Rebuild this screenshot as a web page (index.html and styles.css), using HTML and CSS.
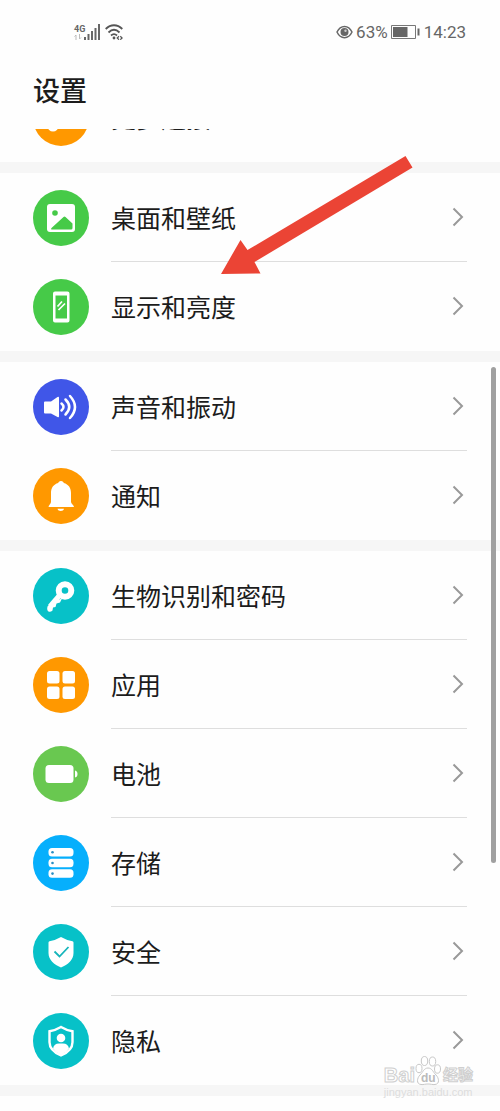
FILE: index.html
```html
<!DOCTYPE html>
<html lang="zh-CN">
<head>
<meta charset="utf-8">
<meta name="viewport" content="width=device-width, initial-scale=1">
<title>设置</title>
<link rel="stylesheet" href="styles.css">
</head>
<body>
<svg class="defs" aria-hidden="true">
  <symbol id="chevron" viewBox="0 0 12 20"><path d="M1.5 1.5 10 10l-8.500 8.500" fill="none" stroke="currentColor" stroke-width="2"/></symbol>
</svg>
<header class="header">
  <div class="status">
    <div class="status-side">
      <span class="network"><span>4G</span><svg width="8" height="6" viewBox="0 0 8 6"><path d="M2 6V1L.5 2.500M5.500 0v5L7 3.500" fill="none" stroke="#bbb"/></svg></span>
      <svg width="17" height="16" viewBox="0 0 17 16" fill="#666"><path d="M0 13h2v3H0zM3.500 10h2v6h-2zM7 7h2v9H7zM10.500 4h2v12h-2zM14 0h2v16h-2z"/></svg>
      <svg class="wifi" width="18" height="16" viewBox="0 0 18 16" fill="none" stroke="#555" stroke-width="1.800"><path d="M.7 5c5-5 11.600-5 16.600 0M3.500 8.500c3.500-3.500 7.500-3.500 11 0M6 11.500c2-1.800 4-1.800 6 0"/><circle cx="9" cy="14" r="1.400" fill="#555" stroke="none"/><path d="m14 12.300-1.800 1.700 1.800 1.700M15.300 12.300l1.800 1.700-1.800 1.700" stroke-width="1.200"/></svg>
    </div>
    <div class="status-side">
      <svg width="17" height="14" viewBox="0 0 17 14"><path d="M1 7c3.500-7.500 11.500-7.500 15 0-3.500 7.500-11.500 7.500-15 0z" fill="none" stroke="#666" stroke-width="1.500"/><circle cx="8.500" cy="7" r="4" fill="#666"/><circle cx="9.500" cy="5.800" r="1.200" fill="#ccc"/></svg>
      <span>63%</span>
      <svg class="battery" width="29" height="14" viewBox="0 0 29 14"><path d="M.5.5h24v13H.5z" fill="none" stroke="#777"/><path d="M2 2h14.500v10H2zM26.500 3.500h2v7h-2z" fill="#666"/></svg>
      <time>14:23</time>
    </div>
  </div>
  <h1 class="title">设置</h1>
</header>
<main class="viewport">
  <div class="sections">
    <ul class="section">
      <li><a class="row" href="#more"><span class="icon orange"><svg viewBox="0 0 56 56"><path d="m20 36 16-16" stroke="#fff" stroke-width="5"/><circle cx="20" cy="36" r="5.500" fill="#fff"/><circle cx="36" cy="20" r="6" fill="#fff"/></svg></span><span class="label">更多连接<svg class="chevron"><use href="#chevron"/></svg></span></a></li>
    </ul>
    <ul class="section">
      <li><a class="row" href="#wallpaper"><span class="icon green"><svg viewBox="0 0 56 56"><rect x="14" y="14" width="28" height="28" rx="3" fill="#fff"/><circle cx="22" cy="23" r="2.800" fill="#46ca48"/><path d="M18.500 39.500q-1-.5 0-1.500L30.500 27Q31.500 26 32.500 27L39.500 33.500V38Q39.500 39.500 38 39.500z" fill="#46ca48"/></svg></span><span class="label">桌面和壁纸<svg class="chevron"><use href="#chevron"/></svg></span></a></li>
      <li><a class="row" href="#display"><span class="icon green"><svg viewBox="0 0 56 56" fill="none" stroke="#fff"><path d="M22 12.500h12.500a2 2 0 0 1 2 2v27a2 2 0 0 1-2 2H22a2 2 0 0 1-2-2v-27a2 2 0 0 1 2-2zM22.500 16.500v23H34v-23z" fill="#fff" fill-rule="evenodd" stroke="none"/><path d="m24.500 27.500 4.500-5M25.500 31l6.500-6.500" stroke-width="1.700"/></svg></span><span class="label">显示和亮度<svg class="chevron"><use href="#chevron"/></svg></span></a></li>
    </ul>
    <ul class="section">
      <li><a class="row" href="#sound"><span class="icon blue"><svg viewBox="0 0 56 56"><path d="M12 22.500h6L24.500 18q1.500-1 1.500.8v18.400q0 1.800-1.500.8L18 34.500h-6q-1 0-1-1v-10q0-1 1-1z" fill="#fff"/><path d="M28.500 24.500q4 3.500 0 7M32.500 20.500q7.500 7.500 0 15M37 17q10 11 0 22" fill="none" stroke="#fff" stroke-width="2.500" stroke-linecap="round"/></svg></span><span class="label">声音和振动<svg class="chevron"><use href="#chevron"/></svg></span></a></li>
      <li><a class="row" href="#notify"><span class="icon orange"><svg viewBox="0 0 56 56" fill="#fff"><path d="M28 13c1.800 0 2.500 1 2.800 2 4.700 1.300 7.200 5 7.200 10v9c0 2 3 3 3 5H15.500c0-2 2.500-3 2.500-5v-9c0-5 2.500-8.700 7.200-10 .3-1 1-2 2.800-2zM24.500 40.800h6.500c-.5 3-6 3-6.500 0z"/></svg></span><span class="label">通知<svg class="chevron"><use href="#chevron"/></svg></span></a></li>
    </ul>
    <ul class="section">
      <li><a class="row" href="#biometrics"><span class="icon teal"><svg viewBox="0 0 56 56"><path d="m26 28-9 10.500" stroke="#fff" stroke-width="5"/><path d="m18 34.500-3.500 4q-1 3.500 1 5 2 .8 4-1l.5-3 2.500-.5 1-3.500 3.500-1 2-4z" fill="#fff"/><circle cx="32" cy="22.500" r="6.300" fill="none" stroke="#fff" stroke-width="6"/></svg></span><span class="label">生物识别和密码<svg class="chevron"><use href="#chevron"/></svg></span></a></li>
      <li><a class="row" href="#apps"><span class="icon orange"><svg viewBox="0 0 56 56" fill="#fff"><rect x="14" y="14" width="12.500" height="12.500" rx="2.500"/><rect x="29.500" y="14" width="12.500" height="12.500" rx="2.500"/><rect x="14" y="29.500" width="12.500" height="12.500" rx="2.500"/><rect x="29.500" y="29.500" width="12.500" height="12.500" rx="2.500"/></svg></span><span class="label">应用<svg class="chevron"><use href="#chevron"/></svg></span></a></li>
      <li><a class="row" href="#battery"><span class="icon lime"><svg viewBox="0 0 56 56" fill="#fff"><rect x="12.500" y="19" width="28" height="18" rx="3.500"/><path d="M42 24.500q2.500.5 2.500 3.500T42 31.500z"/></svg></span><span class="label">电池<svg class="chevron"><use href="#chevron"/></svg></span></a></li>
      <li><a class="row" href="#storage"><span class="icon sky"><svg viewBox="0 0 56 56"><g fill="#fff"><rect x="15.500" y="13" width="25" height="8.500" rx="3.500"/><rect x="15.500" y="23.700" width="25" height="8.500" rx="3.500"/><rect x="15.500" y="34.300" width="25" height="8.500" rx="3.500"/></g><g fill="#2a8fc4"><circle cx="19.500" cy="17.300" r="1.300"/><circle cx="19.500" cy="28" r="1.300"/><circle cx="19.500" cy="38.600" r="1.300"/></g></svg></span><span class="label">存储<svg class="chevron"><use href="#chevron"/></svg></span></a></li>
      <li><a class="row" href="#security"><span class="icon teal"><svg viewBox="0 0 56 56"><path d="M28 13q6 3.500 11.500 4.200 1 .2 1 1.300v10.500c0 7-5.500 11.500-12.500 14.500-7-3-12.500-7.500-12.500-14.500V18.500q0-1.100 1-1.300Q22 16.500 28 13z" fill="#fff"/><path d="m21.500 27.500 5 5 9-9.500" fill="none" stroke="#16b5bb" stroke-width="1.800"/></svg></span><span class="label">安全<svg class="chevron"><use href="#chevron"/></svg></span></a></li>
      <li><a class="row" href="#privacy"><span class="icon teal"><svg viewBox="0 0 56 56"><path d="M28 14q5.500 3.300 11.500 4.200v11c0 6.500-5 10.500-11.500 13.300-6.500-2.800-11.500-6.800-11.500-13.300v-11Q22.500 17.300 28 14z" fill="none" stroke="#fff" stroke-width="2.400"/><circle cx="28" cy="25" r="4.300" fill="#fff"/><path d="M20 35.500q1-5 6-5h4q5 0 6 5-3 4.500-8 6.500-5-2-8-6.500z" fill="#fff"/></svg></span><span class="label">隐私<svg class="chevron"><use href="#chevron"/></svg></span></a></li>
    </ul>
  </div>
  <div class="scroll-thumb"></div>
  <svg class="pointer" width="192" height="120" viewBox="0 0 192 120"><path d="M0 118 19.500 84l7 10L184.500 0l7 11.500L33.500 106l6 11.500z" fill="#eb4435"/></svg>
  <div class="watermark">
    <div class="brand"><span>Bai</span><svg width="26" height="30" viewBox="0 0 26 30" fill="#fff" stroke="#c8c8c8"><ellipse cx="4" cy="12.500" rx="3" ry="4.200"/><ellipse cx="9.500" cy="5" rx="3.200" ry="4.500"/><ellipse cx="17.500" cy="5.500" rx="3.200" ry="4.500"/><ellipse cx="22.500" cy="13" rx="3" ry="4.200"/><path d="M13 12c4 0 5 4 8 7s4 9-1 9.500c-3 .3-4-.5-7-.5s-4 .8-7 .5c-5-.5-4-6.500-1-9.500s4-7 8-7z"/><text x="6" y="26" class="du">du</text></svg><span class="cn">经验</span></div>
    <div class="domain">jingyan.baidu.com</div>
  </div>
</main>
</body>
</html>
```
FILE: styles.css
```css
* { box-sizing: border-box; }

body {
  margin: 0;
  height: 100vh;
  display: flex;
  flex-direction: column;
  overflow: hidden;
  background: #fefefe;
  color: #1c1c1c;
  font-family: "Noto Sans CJK SC", sans-serif;
}

.defs { display: none; }

.header {
  flex: none;
  height: 129px;
  padding: 20px 33px 0;
}

.status {
  display: flex;
  justify-content: space-between;
  align-items: center;
  height: 24px;
  padding: 0 1px 0 41px;
  color: #666;
  font: 17px/24px Roboto, sans-serif;
}

.status-side {
  display: flex;
  align-items: center;
  gap: 3px;
}

.network {
  display: flex;
  flex-direction: column;
  margin-right: -4px;
  font: bold 9px/10px Roboto, sans-serif;
}

.wifi { margin-left: 1px; }
.battery { margin-right: 1px; }

.title {
  margin: 26px 0 0;
  font-size: 27px;
  line-height: 40px;
  font-weight: 500;
}

.viewport {
  position: relative;
  flex: 1;
  min-height: 0;
  overflow: hidden;
}

/* The list is scrolled so that its first row is partly under the header. */
.sections { margin-top: -56px; }

.section {
  margin: 0;
  padding: 0;
  list-style: none;
  border-bottom: 11px solid #f6f6f6;
}

.row {
  display: flex;
  align-items: center;
  gap: 22px;
  height: 89px;
  padding: 0 33px;
  color: inherit;
  text-decoration: none;
}

.icon {
  flex: none;
  width: 56px;
  height: 56px;
  border-radius: 50%;
}

.icon svg { display: block; }

.green { background: #46ca48; }
.orange { background: #ff9800; }
.blue { background: #4056e8; }
.teal { background: #07c1c8; }
.lime { background: #69c850; }
.sky { background: #06affc; }

.label {
  flex: 1;
  display: flex;
  align-items: center;
  justify-content: space-between;
  height: 100%;
  padding-right: 3px;
  border-bottom: 1px solid #dedede;
  font-size: 25px;
  line-height: 36px;
}

li:last-child .label { border-bottom-color: transparent; }

.chevron {
  width: 12px;
  height: 20px;
  color: #999;
}

.scroll-thumb {
  position: absolute;
  top: 238px;
  right: 4px;
  width: 5px;
  height: 496px;
  border-radius: 3px;
  background: #a0a0a0;
}

.pointer {
  position: absolute;
  top: 27px;
  left: 221px;
}

.watermark {
  position: absolute;
  right: 27px;
  bottom: 12px;
  color: #fff;
  font-family: "Liberation Sans", "Noto Sans CJK SC", sans-serif;
  -webkit-text-stroke: 1px #cfcfcf;
}

.brand {
  display: flex;
  align-items: flex-end;
  font-weight: bold;
  font-size: 20px;
  line-height: 22px;
}

.cn {
  margin-left: 2px;
  font-size: 15px;
}

.du {
  fill: #bbb;
  stroke: none;
  -webkit-text-stroke: 0;
  font-size: 12px;
}

.domain {
  color: #ddd;
  font-size: 11px;
  line-height: 13px;
  -webkit-text-stroke: 0;
}
```
